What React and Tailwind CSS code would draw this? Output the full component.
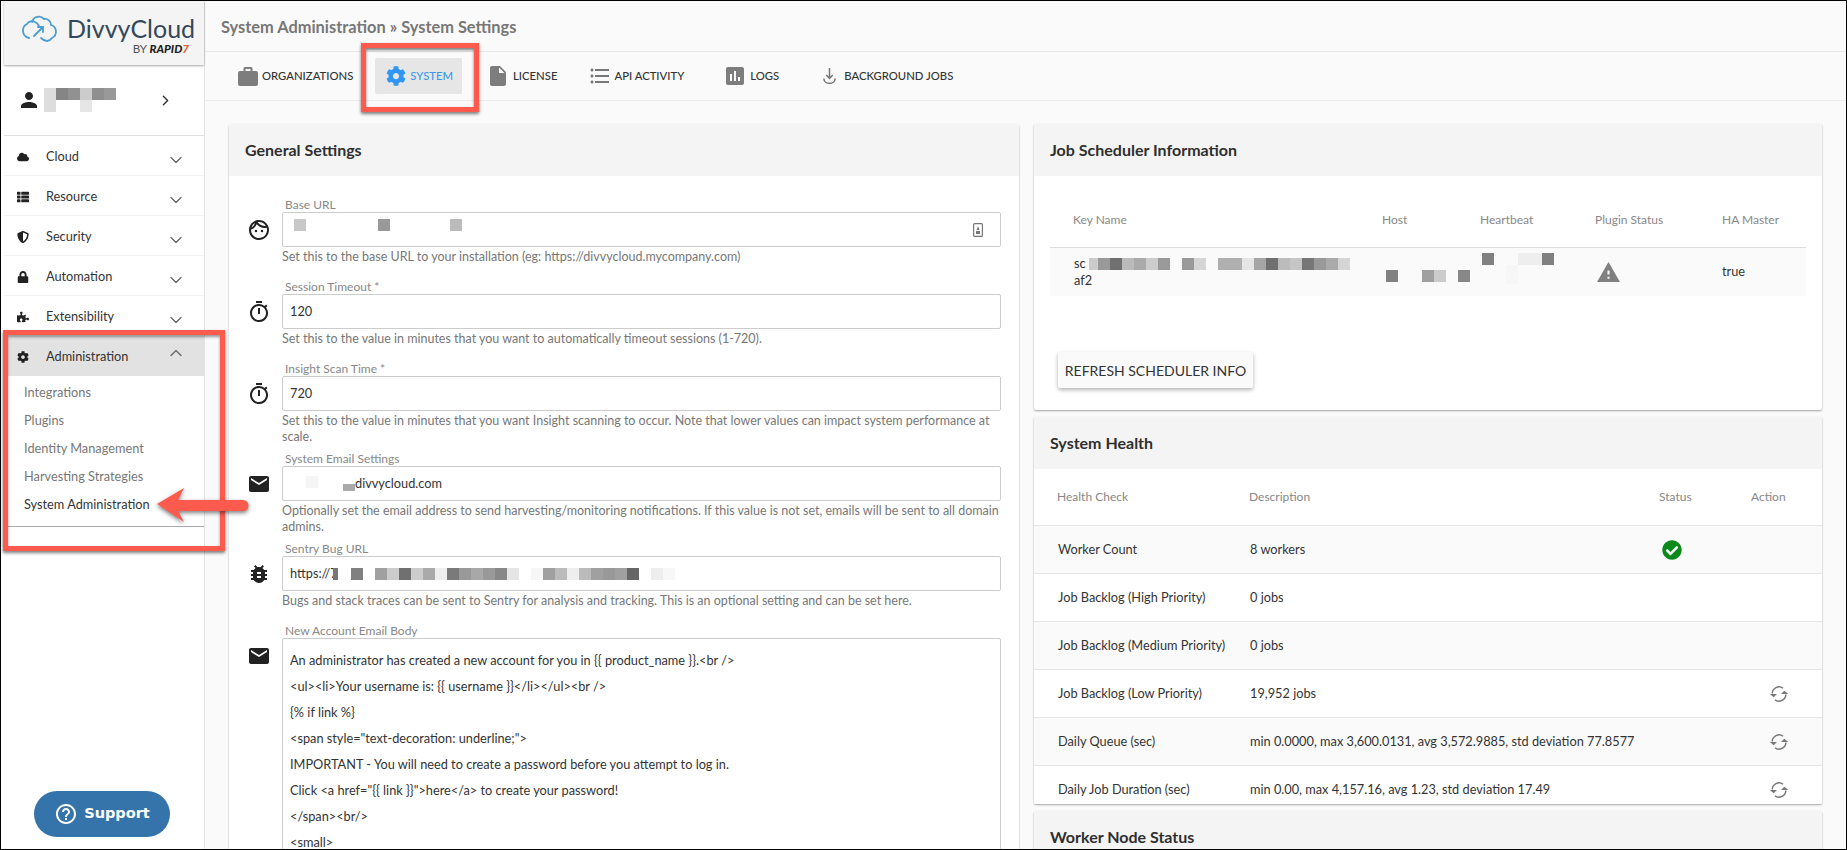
import { ChevronDown, ChevronUp, ChevronRight } from "lucide-react";
import { FaCloud, FaThList, FaShieldAlt, FaLock, FaPuzzlePiece, FaCog, FaCheckCircle } from "react-icons/fa";
import { MdOutlineFace, MdOutlineTimer, MdEmail, MdBugReport, MdInsertDriveFile, MdFormatListBulleted, MdAssessment, MdPerson, MdWarning, MdHelpOutline } from "react-icons/md";

const nav = [
  { label: "Cloud", icon: FaCloud },
  { label: "Resource", icon: FaThList },
  { label: "Security", icon: FaShieldAlt },
  { label: "Automation", icon: FaLock },
  { label: "Extensibility", icon: FaPuzzlePiece },
];

const adminItems = ["Integrations", "Plugins", "Identity Management", "Harvesting Strategies"];

const health = [
  { name: "Worker Count", desc: "8 workers", ok: true },
  { name: "Job Backlog (High Priority)", desc: "0 jobs" },
  { name: "Job Backlog (Medium Priority)", desc: "0 jobs" },
  { name: "Job Backlog (Low Priority)", desc: "19,952 jobs", sync: true },
  { name: "Daily Queue (sec)", desc: "min 0.0000, max 3,600.0131, avg 3,572.9885, std deviation 77.8577", sync: true },
  { name: "Daily Job Duration (sec)", desc: "min 0.00, max 4,157.16, avg 1.23, std deviation 17.49", sync: true },
];

const emailBody = [
  "An administrator has created a new account for you in {{ product_name }}.<br />",
  "<ul><li>Your username is: {{ username }}</li></ul><br />",
  "{% if link %}",
  '<span style="text-decoration: underline;">',
  "IMPORTANT - You will need to create a password before you attempt to log in.",
  'Click <a href="{{ link }}">here</a> to create your password!',
  "</span><br/>",
  "<small>",
];

// blurred-out values from the screenshot, one entry per mosaic cell
const sentryCells = ["bg-[#a0a0a0]", "bg-[#cccccc]", "bg-[#707070]", "bg-[#cccccc]", "bg-[#aaaaaa]", "bg-[#eeeeee]", "bg-[#7a7a7a]", "bg-[#999999]", "bg-[#a8a8a8]", "bg-[#999999]", "bg-[#888888]", "bg-[#e5e5e5]", "", "bg-[#f7f7f7]", "bg-[#a0a0a0]", "bg-[#bbbbbb]", "bg-[#eeeeee]", "bg-[#bbbbbb]", "bg-[#a0a0a0]", "bg-[#999999]", "bg-[#a0a0a0]", "bg-[#666666]", "", "bg-[#eeeeee]", "bg-[#f7f7f7]"];
const keyCells = ["bg-[#999999]", "bg-[#707070]", "bg-[#bbbbbb]", "bg-[#aaaaaa]", "bg-[#cccccc]", "bg-[#999999]", "", "bg-[#999999]", "bg-[#d5d5d5]", "", "bg-[#b0b0b0]", "bg-[#b0b0b0]", "bg-[#e5e5e5]", "bg-[#a5a5a5]", "bg-[#707070]", "bg-[#bbbbbb]", "bg-[#c5c5c5]", "bg-[#777777]", "bg-[#999999]", "bg-[#aaaaaa]", "bg-[#d5d5d5]"];
const hostCells = ["bg-[#808080]", "", "", "bg-[#a0a0a0]", "bg-[#cccccc]", "", "bg-[#888888]"];
const beatCells = ["bg-[#808080]", "", "", "bg-[#eeeeee]", "bg-[#eeeeee]", "bg-[#808080]"];
const baseCells = ["bg-[#c8c8c8]", "", "", "", "", "", "", "bg-[#999999]", "", "", "", "", "", "bg-[#bbbbbb]"];

function Mosaic({ cells, className = "" }) {
  return (
    <div className={`flex shrink-0 ${className}`}>
      {cells.map((c, i) => (
        <div key={i} className={`w-[12px] h-[12px] ${c}`} />
      ))}
    </div>
  );
}

function SyncIcon() {
  return (
    <svg viewBox="0 0 24 24" className="w-[22px] h-[22px] text-[#777777]" fill="none" stroke="currentColor" strokeWidth="1.6">
      <path d="M4.500 11.500a7.600 7.600 0 0 1 12-5.800" />
      <path d="M19.500 12.500a7.600 7.600 0 0 1-12 5.800" />
      <path d="M17.800 8.500 22 12h-7.800z" fill="currentColor" stroke="none" />
      <path d="M6.200 15.500 2 12h7.800z" fill="currentColor" stroke="none" />
    </svg>
  );
}

function Field({ icon: Icon, label, hint, children, boxClass = "h-[35px] flex items-center" }) {
  return (
    <div className="flex min-h-[82px] pb-[7px]">
      <div className="w-[28px] mr-[9px] pt-[20px] shrink-0 flex justify-center">
        <Icon className="text-[24px] text-[#222222]" />
      </div>
      <div className="flex-1 min-w-0">
        <div className="h-[14px] pl-[3px] text-[12px] leading-[14px] text-[#888888]">{label}</div>
        <div className={`relative border border-[#cccccc] rounded-[2px] bg-white pl-[7px] text-[12.75px] text-[#333333] ${boxClass}`}>
          {children}
        </div>
        {hint && <p className="mt-[2px] text-[12.5px] leading-[16px] text-[#777777]">{hint}</p>}
      </div>
    </div>
  );
}

function Card({ title, className = "", children }) {
  return (
    <section className={`bg-white rounded-[2px] overflow-hidden shadow-[0_1px_2px_rgba(0,0,0,0.35)] ${className}`}>
      <h2 className="h-[52px] flex items-center px-[16px] bg-[#f4f4f4] text-[16px] font-bold text-[#2f2f2f]">{title}</h2>
      {children}
    </section>
  );
}

function Logo() {
  return (
    <div className="h-[64px] bg-[#f4f4f4] shadow-[0_1px_2px_rgba(0,0,0,0.35)] flex items-start pl-[16px] pt-[12px] relative">
      <svg viewBox="0 0 38 30" className="w-[38px] h-[30px] mt-[1px] text-[#4b9cd3]" fill="none" stroke="currentColor" strokeWidth="1.8" strokeLinecap="round">
        <path d="M12 8a7 7 0 0 1 12-3 6 6 0 0 1 7 6 7 7 0 0 1 1 13 7 7 0 0 1-5 3c-3 0-4-1-6-3" />
        <path d="M9 24a7.500 7.500 0 0 1-2-14 6 6 0 0 1 8-2c2 1 3 2 4 4" />
        <path d="M14 22l9-9M23 18v-5h-5" />
      </svg>
      <div className="ml-[9px] leading-none">
        <div className="text-[25px] leading-[30px] text-[#33485c]">DivvyCloud</div>
        <div className="text-[11.5px] leading-[10px] text-right text-[#555555] mt-[1px] w-[122px]">
          BY <span className="font-black italic text-[#222222]">RAPID</span>
          <span className="font-black italic text-[#e8632c]">7</span>
        </div>
      </div>
    </div>
  );
}

function Sidebar() {
  return (
    <aside className="w-[201px] shrink-0 border-r border-[#e4e4e4] bg-white flex flex-col">
      <Logo />
      <div className="h-[71px] shrink-0 border-b border-[#e0e0e0] flex items-start pt-[23px] pl-[14px] relative">
        <MdPerson className="text-[24px] text-[#222222] -ml-[1px]" />
        <div className="ml-[3px]">
          <Mosaic cells={["bg-[#dddddd]", "bg-[#858585]", "bg-[#919191]", "bg-[#cccccc]", "bg-[#8f8f8f]", "bg-[#999999]"]} />
          <Mosaic cells={["bg-[#dddddd]", "", "", "bg-[#e6e6e6]"]} />
        </div>
        <ChevronRight className="absolute left-[153px] top-[27px] w-[17px] h-[17px] text-[#333333]" strokeWidth={2} />
      </div>
      {nav.map(({ label, icon: Icon }) => (
        <div key={label} className="h-[40px] shrink-0 pt-[2px] border-b border-[#f2f2f2] flex items-center relative text-[12.75px] text-[#333333]">
          <span className="w-[42px] flex justify-center pr-[5px]">
            <Icon className="text-[12px] text-[#222222]" />
          </span>
          <span>{label}</span>
          <ChevronDown className="absolute left-[162px] top-[14px] w-[20px] h-[20px] text-[#666666]" strokeWidth={1.5} />
        </div>
      ))}
      <div className="h-[40px] shrink-0 pt-[2px] bg-[#e2e2e2] flex items-center relative text-[12.75px] text-[#333333]">
        <span className="w-[42px] flex justify-center pr-[5px]">
          <FaCog className="text-[12px] text-[#222222]" />
        </span>
        <span>Administration</span>
        <ChevronUp className="absolute left-[162px] top-[7px] w-[20px] h-[20px] text-[#666666]" strokeWidth={1.5} />
      </div>
      <div className="pt-[1.500px] pl-[20px] border-b border-[#aaaaaa] h-[151px] shrink-0 text-[12.75px] leading-[28px] text-[#777777]">
        {adminItems.map((item) => (
          <div key={item}>{item}</div>
        ))}
        <div className="text-[#333333]">System Administration</div>
      </div>
    </aside>
  );
}

function Tab({ icon, label, className = "", active }) {
  return (
    <div className={`h-[36px] pl-[11px] rounded-[2px] flex items-center gap-[4px] text-[11.3px] font-medium ${active ? "bg-[#e6e6e6] text-[#3b98ee] pr-[9px]" : "text-[#333333] pr-[11px]"} ${className}`}>
      {icon}
      <span>{label}</span>
    </div>
  );
}

function Tabs() {
  return (
    <div className="h-[49px] shrink-0 border-b border-[#ececec] flex items-center">
      <Tab
        className="ml-[22px]"
        label="ORGANIZATIONS"
        icon={
          <svg viewBox="0 0 20 20" className="w-[20px] h-[20px] text-[#7d7d7d]">
            <path fill="currentColor" d="M7 1h6a1.500 1.500 0 0 1 1.500 1.500V5H18a2 2 0 0 1 2 2v11a2 2 0 0 1-2 2H2a2 2 0 0 1-2-2V7a2 2 0 0 1 2-2h3.500V2.500A1.500 1.500 0 0 1 7 1zm.5 2v2h5V3z" />
          </svg>
        }
      />
      <Tab className="ml-[11px]" active label="SYSTEM" icon={<FaCog className="text-[20px] text-[#2f96f3]" />} />
      <Tab className="ml-[17px]" label="LICENSE" icon={<MdInsertDriveFile className="text-[24px] text-[#7d7d7d] -ml-[4px] -mr-[1px]" />} />
      <Tab className="ml-[11px]" label="API ACTIVITY" icon={<MdFormatListBulleted className="text-[24px] text-[#777777] -ml-[2px] -mr-[2px]" />} />
      <Tab className="ml-[20px]" label="LOGS" icon={<MdAssessment className="text-[24px] text-[#7d7d7d] -ml-[3px] -mr-[1px]" />} />
      <Tab
        className="ml-[21px]"
        label="BACKGROUND JOBS"
        icon={
          <svg viewBox="0 0 16 20" className="w-[15px] h-[19px] mr-[3px] text-[#777777]" fill="none" stroke="currentColor" strokeWidth="1.600">
            <path d="M8 1v11M4.500 8.500 8 12l3.500-3.500" />
            <path d="M2 12c0 7 12 7 12 0" />
          </svg>
        }
      />
    </div>
  );
}

function GeneralSettings() {
  return (
    <Card title="General Settings" className="w-[790px] h-[760px] shrink-0">
      <div className="pt-[22px] pl-[16px] pr-[18px]">
        <Field
          icon={MdOutlineFace}
          label="Base URL"
          hint="Set this to the base URL to your installation (eg: https://divvycloud.mycompany.com)"
        >
          <Mosaic cells={baseCells} className="mb-[10px] ml-[4px]" />
          <svg viewBox="0 0 10 14" className="absolute left-[690px] top-[10px] w-[10px] h-[14px] text-[#777777]">
            <rect x="0.600" y="0.600" width="8.800" height="12.800" rx="1" fill="none" stroke="currentColor" strokeWidth="1.200" />
            <path d="M5 3 6.500 7h-3z M3 8h4v3H3z" fill="currentColor" />
          </svg>
        </Field>
        <Field
          icon={MdOutlineTimer}
          label="Session Timeout *"
          hint="Set this to the value in minutes that you want to automatically timeout sessions (1-720)."
        >
          120
        </Field>
        <Field
          icon={MdOutlineTimer}
          label="Insight Scan Time *"
          hint="Set this to the value in minutes that you want Insight scanning to occur. Note that lower values can impact system performance at scale."
        >
          720
        </Field>
        <Field
          icon={MdEmail}
          label="System Email Settings"
          hint="Optionally set the email address to send harvesting/monitoring notifications. If this value is not set, emails will be sent to all domain admins."
        >
          <span className="w-[12px] h-[12px] bg-[#f5f5f5] ml-[16px] mb-[3px]" />
          <span className="w-[12px] h-[7px] bg-[#aaaaaa] ml-[25px] mt-[8px]" />
          divvycloud.com
        </Field>
        <Field
          icon={MdBugReport}
          label="Sentry Bug URL"
          hint="Bugs and stack traces can be sent to Sentry for analysis and tracking. This is an optional setting and can be set here."
        >
          https://7
          <div className="w-[5px] h-[12px] -ml-[5px] bg-[#777777]" />
          <div className="w-[12px] h-[12px] ml-[13px] bg-[#808080]" />
          <Mosaic cells={sentryCells} className="ml-[12px]" />
        </Field>
        <Field icon={MdEmail} label="New Account Email Body" boxClass="pt-[8px] pb-[40px]">
          {emailBody.map((line) => (
            <div key={line} className="h-[26px] leading-[26px]">{line}</div>
          ))}
        </Field>
      </div>
    </Card>
  );
}

function JobScheduler() {
  return (
    <Card title="Job Scheduler Information" className="h-[286px]">
      <div className="px-[16px]">
        <div className="h-[72px] pt-[36px] border-b border-[#dddddd] grid grid-cols-[332px_98px_115px_127px_1fr] text-[12px] leading-[16px] text-[#888888]">
          <div className="pl-[23px]">Key Name</div>
          <div>Host</div>
          <div>Heartbeat</div>
          <div>Plugin Status</div>
          <div>HA Master</div>
        </div>
        <div className="h-[48px] bg-[#fafafa] grid grid-cols-[332px_98px_115px_127px_1fr] items-center text-[12.75px] text-[#333333]">
          <div className="pl-[24px] leading-[17px]">
            <div className="flex items-center">
              <span className="w-[15px] shrink-0">sc</span>
              <div className="w-[9px] h-[12px] bg-[#cccccc]" />
              <Mosaic cells={keyCells} />
            </div>
            <div>af2</div>
          </div>
          <Mosaic cells={hostCells} className="ml-[4px] mt-[8px]" />
          <div className="-mt-[7px] ml-[2px]">
            <Mosaic cells={beatCells} />
            <div className="w-[12px] h-[19px] bg-[#f7f7f7] ml-[24px]" />
          </div>
          <MdWarning className="text-[25px] text-[#808080] ml-[1px]" />
          <div>true</div>
        </div>
        <button className="block mt-[56px] ml-[8px] w-[195px] h-[36px] bg-[#fafafa] rounded-[2px] shadow-[0_2px_4px_rgba(0,0,0,0.3)] text-[14px] text-[#333333]">
          REFRESH SCHEDULER INFO
        </button>
      </div>
    </Card>
  );
}

function SystemHealth() {
  return (
    <Card title="System Health" className="h-[387px]">
      <div className="h-[56px] pt-[20px] grid grid-cols-[192px_410px_92px_1fr] pl-[23px] text-[12px] leading-[16px] text-[#888888]">
        <div>Health Check</div>
        <div>Description</div>
        <div>Status</div>
        <div>Action</div>
      </div>
      {health.map((h, i) => (
        <div
          key={h.name}
          className={`h-[48px] shrink-0 border-t border-[#e5e5e5] grid grid-cols-[192px_410px_92px_1fr] items-center pl-[24px] text-[12.75px] text-[#333333] ${i % 2 === 0 ? "bg-[#fafafa]" : "bg-white"}`}
        >
          <div>{h.name}</div>
          <div>{h.desc}</div>
          <div>{h.ok && <FaCheckCircle className="text-[20px] text-[#0a8a1a] ml-[2px]" />}</div>
          <div className="pl-[16px]">{h.sync && <SyncIcon />}</div>
        </div>
      ))}
    </Card>
  );
}

export default function App() {
  return (
    <div className="relative w-screen h-screen overflow-hidden border border-black bg-white pl-[3px] flex font-['Lato',sans-serif]">
      <Sidebar />
      <main className="flex-1 min-w-0 bg-[#fafafa] flex flex-col">
        <div className="h-[51px] shrink-0 border-b border-[#e8e8e8] flex items-center pl-[16px] pt-[2px] text-[16.4px] font-bold text-[#777777]">
          System Administration » System Settings
        </div>
        <Tabs />
        <div className="flex pt-[23px] pl-[24px] gap-[15px] items-start">
          <GeneralSettings />
          <div className="w-[788px] shrink-0 flex flex-col gap-[7px]">
            <JobScheduler />
            <SystemHealth />
            <Card title="Worker Node Status" className="h-[60px]" />
          </div>
        </div>
      </main>

      {/* annotations pasted over the screenshot */}
      <div className="absolute left-[360px] top-[42px] w-[118px] h-[69px] border-[5px] border-[#fe5a4d] shadow-[0_2px_3px_rgba(0,0,0,0.5),inset_0_2px_3px_rgba(0,0,0,0.5)]" />
      <div className="absolute left-[2px] top-[329px] w-[222px] h-[221px] border-[5px] border-[#fe5a4d] shadow-[0_2px_3px_rgba(0,0,0,0.5),inset_0_2px_3px_rgba(0,0,0,0.4)]" />
      <svg className="absolute left-[150px] top-[482px] w-[106px] h-[44px]" viewBox="0 0 106 44">
        <path
          d="M6 21 33 5l-6 12h65a5.500 5.500 0 0 1 0 11H27l6 11z"
          fill="#fe5a4d"
          className="drop-shadow-[0_2px_2px_rgba(0,0,0,0.5)]"
        />
      </svg>

      <button className="absolute left-[33px] top-[790px] w-[136px] h-[46px] rounded-full bg-[#3574ab] text-white flex items-center justify-center gap-[6px] text-[14.5px] font-bold font-['DejaVu_Sans',sans-serif]">
        <MdHelpOutline className="text-[24px]" />
        Support
      </button>
    </div>
  );
}
